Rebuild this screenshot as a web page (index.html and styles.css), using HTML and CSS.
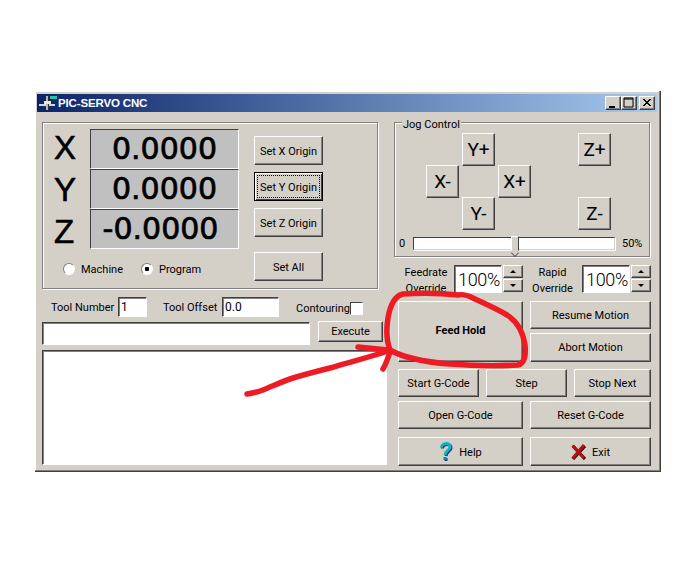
FILE: index.html
```html
<!DOCTYPE html>
<html lang="en">
<head>
<meta charset="utf-8">
<title>PIC-SERVO CNC</title>
<link rel="stylesheet" href="styles.css">
</head>
<body>
<div class="window">
  <div class="titlebar">
    <svg class="app-icon" width="18" height="16" viewBox="0 0 18 16">
      <rect x="0" y="9" width="16" height="2" fill="#d8d8d0"/>
      <rect x="5" y="11" width="6" height="1" fill="#404040"/>
      <rect x="7" y="1" width="3" height="14" fill="#b8b8b0"/>
      <rect x="9" y="1" width="1" height="14" fill="#303030"/>
      <rect x="5" y="6" width="7" height="3" fill="#e8e8e0"/>
      <rect x="11" y="1" width="7" height="3" fill="#30c0b0"/>
    </svg>
    <span class="title-text">PIC-SERVO CNC</span>
    <div class="caption-btns">
      <button class="cap"><svg width="14" height="12" viewBox="0 0 14 12"><rect x="3" y="9" width="6" height="2" fill="#000"/></svg></button>
      <button class="cap"><svg width="14" height="12" viewBox="0 0 14 12"><path d="M2 1h9v9H2z M2 2h9" fill="none" stroke="#000"/></svg></button>
      <button class="cap cap-close"><svg width="14" height="12" viewBox="0 0 14 12"><path d="M3 2l7 7M4 2l7 7M10 2l-7 7M11 2l-7 7" stroke="#000" fill="none"/></svg></button>
    </div>
  </div>
  <div class="content">
    <div class="left">
      <div class="panel coords">
        <div class="coords-main">
          <div class="axes">
            <span class="axis">X</span><output class="readout">0.0000</output>
            <span class="axis">Y</span><output class="readout">0.0000</output>
            <span class="axis">Z</span><output class="readout readout-neg">-0.0000</output>
          </div>
          <div class="radios">
            <label class="radio-label"><input type="radio" name="mode" class="radio">Machine</label>
            <label class="radio-label"><input type="radio" name="mode" class="radio" checked>Program</label>
          </div>
        </div>
        <div class="origins">
          <button class="btn origin">Set X Origin</button>
          <button class="btn origin focused"><span class="focus-ring">Set Y Origin</span></button>
          <button class="btn origin">Set Z Origin</button>
          <button class="btn origin set-all">Set All</button>
        </div>
      </div>
      <div class="tool-row">
        <span class="tool-label">Tool Number</span>
        <input class="field tool-num" value="1">
        <span class="tool-label offset-label">Tool Offset</span>
        <input class="field tool-off" value="0.0">
        <span class="tool-label contour-label">Contouring</span>
        <input type="checkbox" class="check">
      </div>
      <div class="exec-row">
        <input class="field exec-input">
        <button class="btn exec-btn">Execute</button>
      </div>
      <textarea class="field log"></textarea>
    </div>
    <div class="right">
      <div class="panel jog">
        <span class="legend">Jog Control</span>
        <div class="jog-grid">
          <button class="btn jog-btn pos-yp">Y+</button>
          <button class="btn jog-btn pos-zp">Z+</button>
          <button class="btn jog-btn pos-xm">X-</button>
          <button class="btn jog-btn pos-xp">X+</button>
          <button class="btn jog-btn pos-ym">Y-</button>
          <button class="btn jog-btn pos-zm">Z-</button>
        </div>
        <div class="slider-row">
          <span class="slider-min">0</span>
          <div class="track"><span class="thumb"></span></div>
          <span class="slider-max">50%</span>
        </div>
      </div>
      <div class="override-row">
        <span class="ov-label ov-feed">Feedrate<br>Override</span>
        <input class="field ov-input" value="100%">
        <div class="spin"><button class="spin-btn"><i class="tri-up"></i></button><button class="spin-btn"><i class="tri-down"></i></button></div>
        <span class="ov-label ov-rapid">Rapid<br>Override</span>
        <input class="field ov-input" value="100%">
        <div class="spin"><button class="spin-btn"><i class="tri-up"></i></button><button class="spin-btn"><i class="tri-down"></i></button></div>
      </div>
      <div class="motion-row">
        <button class="btn feed-hold">Feed Hold</button>
        <div class="motion-side">
          <button class="btn resume">Resume Motion</button>
          <button class="btn abort">Abort Motion</button>
        </div>
      </div>
      <div class="run-row">
        <button class="btn run">Start G-Code</button>
        <button class="btn run">Step</button>
        <button class="btn run stop">Stop Next</button>
      </div>
      <div class="file-row">
        <button class="btn wide">Open G-Code</button>
        <button class="btn wide narrow">Reset G-Code</button>
      </div>
      <div class="bottom-row">
        <button class="btn wide icon-btn">
          <svg class="btn-icon" width="14" height="20" viewBox="0 0 14 20">
            <g fill="none" stroke="#123c6c" stroke-width="3"><path d="M3.5 6.5C3.5 1.5 12.5 1 12 6C11.7 9.5 7.5 9.5 7 14"/><path d="M5.5 17.5h3"/></g>
            <g fill="none" stroke-width="3"><path d="M2.5 5.5C2.5 .5 11.5 0 11 5C10.7 8.5 6.5 8.5 6 13" stroke="#10b4c4"/><path d="M4.5 16.5h3" stroke="#0a8ea8"/></g>
          </svg>Help
        </button>
        <button class="btn wide narrow icon-btn">
          <svg class="btn-icon" width="15" height="16" viewBox="0 0 15 16"><path d="M2 2L14 15M14 2L2 15" stroke="#301010" stroke-width="3.2" fill="none"/><path d="M1.5 1.5L13 14M13 1L1.5 14.5" stroke="#b01414" stroke-width="3" fill="none"/></svg>Exit
        </button>
      </div>
    </div>
  </div>
</div>
<svg class="scribble" width="696" height="564" viewBox="0 0 696 564">
  <path class="ink" d="M458 295C440 293 418 293 403 294C394 296 390 306 388 318C386 330 387 342 390 350C402 357 425 362 450 364C475 366 500 366 518 365C525 363 526 355 525 345C523 332 518 322 507 315C495 308 483 303 473 298C467 295 462 294 458 295"/>
  <path class="ink" d="M247 394C253 393 258 392 263 390C273 386 283 381 293 378C306 374 318 371 330 368C350 362 370 357 388 351"/>
  <path class="ink" d="M358 347C368 348 378 349 388 350M390 352C388 358 386 364 383 369"/>
</svg>
</body>
</html>
```
FILE: styles.css
```css
* { box-sizing: border-box; }
html, body { margin: 0; padding: 0; background: #fff; }
body { width: 696px; height: 564px; overflow: hidden; position: relative; font: 11px Roboto, "Liberation Sans", sans-serif; color: #000; }
button, input, textarea { font: inherit; letter-spacing: inherit; color: inherit; margin: 0; padding: 0; border-radius: 0; outline: none; }

.window { width: 626px; height: 381px; margin: 91px 0 0 35px; background: #d4d0c8; padding: 3px 3px 0 2px; border-right: 1px solid #404040; border-bottom: 1px solid #404040; box-shadow: inset -1px -1px 0 #808080, inset 1px 1px 0 #fff; }
.titlebar { height: 18px; display: flex; align-items: center; background: linear-gradient(90deg, #0a246a, #a6caf0); padding-left: 2px; }
.app-icon { flex: none; }
.title-text { color: #fff; font: 700 11.5px "Liberation Sans", sans-serif; letter-spacing: -0.15px; margin-left: 1px; }
.caption-btns { display: flex; margin-left: auto; margin-right: 2px; }
.cap { width: 16px; height: 14px; background: #d4d0c8; border: 1px solid; border-color: #fff #404040 #404040 #fff; display: flex; padding: 0; box-shadow: inset -1px -1px 0 #808080; }
.cap-close { margin-left: 2px; }

.content { display: flex; padding-left: 5px; }
.left { width: 345px; padding-top: 10px; }
.right { width: 257px; margin-left: 7px; padding-top: 10px; }

.panel { border: 1px solid #808080; box-shadow: 1px 1px 0 #fff, inset 1px 1px 0 #fff; position: relative; }
.coords { width: 336px; height: 167px; display: flex; padding-left: 47px; padding-top: 6px; }
.coords-main { width: 149px; }
.axes { display: grid; grid-template-columns: 149px; grid-auto-rows: 40px; position: relative; }
.axis { position: absolute; left: -36px; font: 33px/40px "Liberation Sans", sans-serif; width: 26px; -webkit-text-stroke: 0.6px #000; }
.axis:nth-of-type(1) { top: -1px; }
.axis:nth-of-type(2) { top: 41px; }
.axis:nth-of-type(3) { top: 83px; }
.readout { display: block; height: 40px; background: #c0c0c0; border: 1px solid; border-color: #404040 #fff #fff #404040; font: 30px/38px "DejaVu Sans", sans-serif; text-align: center; -webkit-text-stroke: 0.7px #000; }
.readout-neg { padding-right: 8px; }
.radios { display: flex; margin-top: 13px; margin-left: -27px; gap: 18px; width: 200px; }
.radio-label { display: flex; align-items: center; gap: 6px; height: 14px; }
.radio { appearance: none; width: 12px; height: 12px; border-radius: 50%; background: #fff; border: 1px solid; border-color: #808080 #fff #fff #808080; box-shadow: 0 0 0 0.5px #d4d0c8; flex: none; }
.radio:checked { background: radial-gradient(circle, #000 0 2px, #fff 2.5px); }

.origins { margin-left: 15px; padding-top: 7px; display: flex; flex-direction: column; gap: 7px; }
.btn { background: #d4d0c8; border: 1px solid; border-color: #fff #404040 #404040 #fff; box-shadow: inset -1px -1px 0 #808080; display: flex; align-items: center; justify-content: center; padding: 0; white-space: nowrap; }
.origin { width: 69px; height: 29px; padding-top: 1px; }
.focused { border: 1px solid #000; box-shadow: inset 1px 1px 0 #fff, inset -1px -1px 0 #404040; padding-top: 0; }
.focus-ring { border: 1px dotted #000; width: 63px; height: 23px; display: flex; align-items: center; justify-content: center; padding-top: 1px; }
.set-all { margin-top: 8px; }

.tool-row { display: flex; align-items: center; height: 20px; margin-top: 8px; }
.tool-row > .tool-label:first-child { margin-left: 9px; width: 67px; }
.field { background: #fff; border: 1px solid; border-color: #404040 #fff #fff #404040; box-shadow: inset 1px 1px 0 #808080; padding: 1px 2px; }
.tool-num { width: 29px; height: 20px; font-size: 12px; }
.offset-label { margin-left: 16px; width: 59px; }
.tool-off { width: 57px; height: 20px; font-size: 12px; }
.contour-label { margin-left: 17px; width: 54px; position: relative; top: 1px; }
.check { appearance: none; width: 13px; height: 13px; background: #fff; border: 1px solid; border-color: #404040 #fff #fff #404040; position: relative; top: 1px; }

.exec-row { display: flex; margin-top: 4px; height: 24px; }
.exec-input { width: 268px; height: 23px; margin-top: 1px; }
.exec-btn { width: 65px; height: 21px; margin-left: 8px; }
.log { display: block; width: 345px; height: 115px; margin-top: 5px; resize: none; overflow: hidden; }

.jog { width: 256px; height: 135px; }
.legend { position: absolute; left: 7px; top: -4px; padding: 0 1px; background: #d4d0c8; line-height: 12px; }
.jog-grid { display: grid; grid-template-columns: 33px 33px 33px 41px 33px; column-gap: 3px; grid-auto-rows: 32px; margin: 10px 0 0 31px; }
.jog-btn { width: 33px; height: 33px; font-size: 19px; }
.pos-yp { grid-column: 2; grid-row: 1; }
.pos-zp { grid-column: 5; grid-row: 1; }
.pos-xm { grid-column: 1; grid-row: 2; }
.pos-xp { grid-column: 3; grid-row: 2; }
.pos-ym { grid-column: 2; grid-row: 3; }
.pos-zm { grid-column: 5; grid-row: 3; }
.slider-row { display: flex; align-items: center; height: 14px; margin-top: 7px; padding-left: 4px; }
.slider-min { width: 14px; }
.track { width: 202px; height: 13px; background: #fff; border: 1px solid; border-color: #404040 #d4d0c8 #d4d0c8 #404040; box-shadow: 1px 1px 0 #fff; position: relative; }
.thumb { position: absolute; left: 97px; top: -2px; width: 8px; height: 15px; background: #d4d0c8; border: 1px solid; border-color: #fff #404040 transparent #fff; }
.thumb::after { content: ""; position: absolute; left: -1px; top: 13px; width: 6px; height: 6px; transform: translate(0.5px, -0.5px) rotate(45deg) scale(0.8); background: #d4d0c8; border-right: 1px solid #404040; border-bottom: 1px solid #404040; }
.slider-max { margin-left: 7px; }

.override-row { display: flex; height: 28px; margin-top: 8px; margin-left: 4px; }
.ov-label { line-height: 16px; text-align: center; height: 28px; }
.ov-feed { width: 56px; }
.ov-rapid { width: 59px; }
.ov-input { width: 48px; height: 28px; font: 300 18px Roboto, sans-serif; letter-spacing: -0.3px; padding: 0 0 0 3px; }
.spin { width: 20px; margin-left: 1px; display: flex; flex-direction: column; gap: 1px; }
.spin-btn { height: 13px; background: #d4d0c8; border: 1px solid; border-color: #fff #404040 #404040 #fff; box-shadow: inset -1px -1px 0 #808080; display: flex; align-items: center; justify-content: center; }
.tri-up { border: 3px solid transparent; border-top: 0; border-bottom-color: #000; }
.tri-down { border: 3px solid transparent; border-bottom: 0; border-top-color: #000; }

.motion-row { display: flex; margin: 8px 0 0 4px; }
.feed-hold { width: 125px; height: 61px; font-weight: 700; padding-bottom: 2px; }
.motion-side { margin-left: 7px; display: flex; flex-direction: column; gap: 4px; }
.resume { width: 121px; height: 28px; }
.abort { width: 121px; height: 29px; }
.run-row { display: flex; gap: 7px; margin: 7px 0 0 4px; }
.run { width: 81px; height: 28px; }
.stop { width: 77px; }
.file-row { display: flex; gap: 7px; margin: 4px 0 0 4px; }
.bottom-row { display: flex; gap: 7px; margin: 8px 0 0 4px; }
.wide { width: 125px; height: 28px; }
.narrow { width: 121px; }
.bottom-row .wide { height: 29px; }
.icon-btn { gap: 6px; padding-top: 1px; }
.btn-icon { flex: none; }

.scribble { position: absolute; left: 0; top: 0; pointer-events: none; }
.ink { fill: none; stroke: #ed1c24; stroke-width: 5.5px; stroke-linecap: round; stroke-linejoin: round; }
```
